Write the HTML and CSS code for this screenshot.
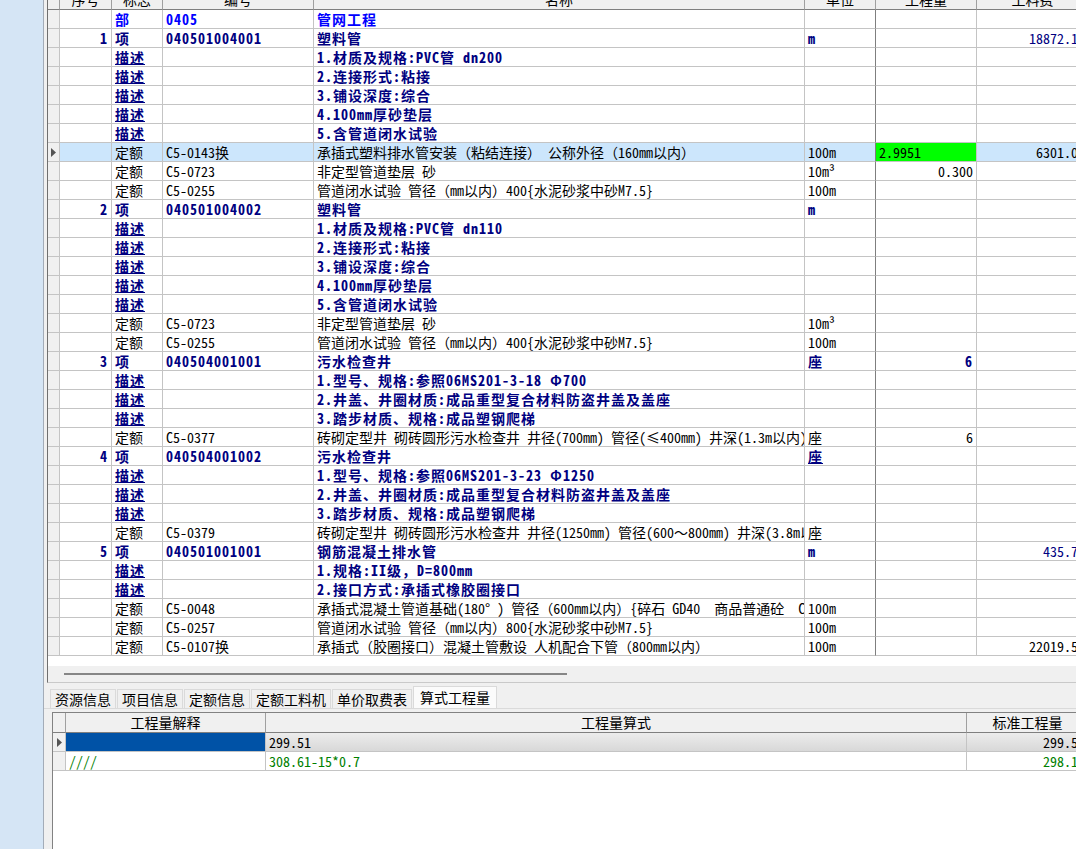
FILE: index.html
```html
<!DOCTYPE html>
<html lang="zh-CN">
<head>
<meta charset="utf-8">
<title>分部分项</title>
<link rel="stylesheet" href="styles.css">
</head>
<body>
<div class="side"></div>
<div class="main">
  <div class="upper">
    <div class="sheet">
      <div class="r hd"><div></div><div>序号</div><div>标志</div><div>编号</div><div>名称</div><div>单位</div><div>工程量</div><div>工料费</div></div>
      <div class="r bu"><div></div><div></div><div>部</div><div>0405</div><div>管网工程</div><div></div><div></div><div></div></div>
      <div class="r xm"><div></div><div>1</div><div>项</div><div>040501004001</div><div>塑料管</div><div>m</div><div></div><div>18872.14</div></div>
      <div class="r ms"><div></div><div></div><div>描述</div><div></div><div>1.材质及规格:PVC管 dn200</div><div></div><div></div><div></div></div>
      <div class="r ms"><div></div><div></div><div>描述</div><div></div><div>2.连接形式:粘接</div><div></div><div></div><div></div></div>
      <div class="r ms"><div></div><div></div><div>描述</div><div></div><div>3.铺设深度:综合</div><div></div><div></div><div></div></div>
      <div class="r ms"><div></div><div></div><div>描述</div><div></div><div>4.100mm厚砂垫层</div><div></div><div></div><div></div></div>
      <div class="r ms"><div></div><div></div><div>描述</div><div></div><div>5.含管道闭水试验</div><div></div><div></div><div></div></div>
      <div class="r sel"><div><svg class="arw" width="5" height="9" viewBox="0 0 5 9"><path d="M0 0L5 4.5L0 9Z"/></svg></div><div></div><div>定额</div><div>C5-0143换</div><div>承插式塑料排水管安装（粘结连接） 公称外径（160mm以内）</div><div>100m</div><div>2.9951</div><div>6301.06</div></div>
      <div class="r"><div></div><div></div><div>定额</div><div>C5-0723</div><div>非定型管道垫层 砂</div><div>10m³</div><div>0.300</div><div></div></div>
      <div class="r"><div></div><div></div><div>定额</div><div>C5-0255</div><div>管道闭水试验 管径（mm以内）400{水泥砂浆中砂M7.5}</div><div>100m</div><div></div><div></div></div>
      <div class="r xm"><div></div><div>2</div><div>项</div><div>040501004002</div><div>塑料管</div><div>m</div><div></div><div></div></div>
      <div class="r ms"><div></div><div></div><div>描述</div><div></div><div>1.材质及规格:PVC管 dn110</div><div></div><div></div><div></div></div>
      <div class="r ms"><div></div><div></div><div>描述</div><div></div><div>2.连接形式:粘接</div><div></div><div></div><div></div></div>
      <div class="r ms"><div></div><div></div><div>描述</div><div></div><div>3.铺设深度:综合</div><div></div><div></div><div></div></div>
      <div class="r ms"><div></div><div></div><div>描述</div><div></div><div>4.100mm厚砂垫层</div><div></div><div></div><div></div></div>
      <div class="r ms"><div></div><div></div><div>描述</div><div></div><div>5.含管道闭水试验</div><div></div><div></div><div></div></div>
      <div class="r"><div></div><div></div><div>定额</div><div>C5-0723</div><div>非定型管道垫层 砂</div><div>10m³</div><div></div><div></div></div>
      <div class="r"><div></div><div></div><div>定额</div><div>C5-0255</div><div>管道闭水试验 管径（mm以内）400{水泥砂浆中砂M7.5}</div><div>100m</div><div></div><div></div></div>
      <div class="r xm"><div></div><div>3</div><div>项</div><div>040504001001</div><div>污水检查井</div><div>座</div><div>6</div><div></div></div>
      <div class="r ms"><div></div><div></div><div>描述</div><div></div><div>1.型号、规格:参照06MS201-3-18 Φ700</div><div></div><div></div><div></div></div>
      <div class="r ms"><div></div><div></div><div>描述</div><div></div><div>2.井盖、井圈材质:成品重型复合材料防盗井盖及盖座</div><div></div><div></div><div></div></div>
      <div class="r ms"><div></div><div></div><div>描述</div><div></div><div>3.踏步材质、规格:成品塑钢爬梯</div><div></div><div></div><div></div></div>
      <div class="r"><div></div><div></div><div>定额</div><div>C5-0377</div><div>砖砌定型井 砌砖圆形污水检查井 井径(700mm) 管径(≤400mm) 井深(1.3m以内)</div><div>座</div><div>6</div><div></div></div>
      <div class="r xm"><div></div><div>4</div><div>项</div><div>040504001002</div><div>污水检查井</div><div class="u">座</div><div></div><div></div></div>
      <div class="r ms"><div></div><div></div><div>描述</div><div></div><div>1.型号、规格:参照06MS201-3-23 Φ1250</div><div></div><div></div><div></div></div>
      <div class="r ms"><div></div><div></div><div>描述</div><div></div><div>2.井盖、井圈材质:成品重型复合材料防盗井盖及盖座</div><div></div><div></div><div></div></div>
      <div class="r ms"><div></div><div></div><div>描述</div><div></div><div>3.踏步材质、规格:成品塑钢爬梯</div><div></div><div></div><div></div></div>
      <div class="r"><div></div><div></div><div>定额</div><div>C5-0379</div><div>砖砌定型井 砌砖圆形污水检查井 井径(1250mm) 管径(600～800mm) 井深(3.8m以内)</div><div>座</div><div></div><div></div></div>
      <div class="r xm"><div></div><div>5</div><div>项</div><div>040501001001</div><div>钢筋混凝土排水管</div><div>m</div><div></div><div>435.72</div></div>
      <div class="r ms"><div></div><div></div><div>描述</div><div></div><div>1.规格:II级，D=800mm</div><div></div><div></div><div></div></div>
      <div class="r ms"><div></div><div></div><div>描述</div><div></div><div>2.接口方式:承插式橡胶圈接口</div><div></div><div></div><div></div></div>
      <div class="r"><div></div><div></div><div>定额</div><div>C5-0048</div><div>承插式混凝土管道基础(180° ) 管径（600mm以内）{碎石 GD40  商品普通砼  C15}</div><div>100m</div><div></div><div></div></div>
      <div class="r"><div></div><div></div><div>定额</div><div>C5-0257</div><div>管道闭水试验 管径（mm以内）800{水泥砂浆中砂M7.5}</div><div>100m</div><div></div><div></div></div>
      <div class="r"><div></div><div></div><div>定额</div><div>C5-0107换</div><div>承插式（胶圈接口）混凝土管敷设 人机配合下管（800mm以内）</div><div>100m</div><div></div><div>22019.53</div></div>
    </div>
    <div class="fill"></div>
    <div class="hscroll"><div class="thumb"></div></div>
  </div>
  <div class="tabs">
    <div class="tab">资源信息</div>
    <div class="tab">项目信息</div>
    <div class="tab">定额信息</div>
    <div class="tab">定额工料机</div>
    <div class="tab">单价取费表</div>
    <div class="tab on">算式工程量</div>
  </div>
  <div class="panel">
    <div class="lg">
      <div class="lr lhd"><div></div><div>工程量解释</div><div>工程量算式</div><div>标准工程量</div></div>
      <div class="lr lsel"><div><svg class="arw" width="5" height="9" viewBox="0 0 5 9"><path d="M0 0L5 4.5L0 9Z"/></svg></div><div></div><div>299.51</div><div>299.51</div></div>
      <div class="lr green"><div></div><div>////</div><div>308.61-15*0.7</div><div>298.11</div></div>
    </div>
  </div>
</div>
</body>
</html>
```
FILE: styles.css
```css
* { box-sizing: border-box; }
html, body { margin: 0; }
body {
  width: 1076px;
  height: 849px;
  overflow: hidden;
  display: flex;
  background: #f0f0f0;
  font-family: "Noto Sans Mono CJK SC", "Noto Sans CJK SC", sans-serif;
  font-size: 14px;
  line-height: 18px;
  color: #000;
}
.side {
  flex: none;
  width: 44px;
  background: #d5e5f5;
  border-right: 1px solid #a3acb8;
}
.main {
  flex: 1;
  min-width: 0;
  display: flex;
  flex-direction: column;
  overflow: hidden;
}
.upper {
  flex: none;
  margin: -10px 0 0 3px;
  background: #fff;
  border-left: 1px solid #6f6f6f;
  border-bottom: 1px solid #c9c9c9;
  overflow: hidden;
}
.r {
  display: grid;
  grid-template-columns: 12px 52px 51px 151px 491px 71px 101px 112px;
  height: 19px;
}
.r > div {
  border-right: 1px solid #c4c4c4;
  border-bottom: 1px solid #c4c4c4;
  padding: 0 3px;
  white-space: pre;
  overflow: hidden;
}
.r > :first-child {
  background: #f0f0f0;
  padding: 0;
  display: flex;
  align-items: center;
  justify-content: center;
}
.r > :nth-child(2), .r > :nth-child(7), .r > :nth-child(8) { text-align: right; }
.r > :nth-child(6) { border-right-color: #7f7f7f; }
.r.hd { height: 20px; background: #f0f0f0; }
.r.hd > div {
  text-align: center;
  border-right-color: #a0a0a0;
  border-bottom-color: #7f7f7f;
  line-height: 19px;
}
.bu { color: #0000ff; font-weight: 700; letter-spacing: 1px; }
.xm, .ms { color: #000080; font-weight: 700; letter-spacing: 1px; }
.xm > :nth-child(8) { font-weight: 400; letter-spacing: 0; }
.ms > :nth-child(3), .u { text-decoration: underline; }
.sel { background: #cce6fc; }
.r.sel > :nth-child(7) { background: #00ff00; text-align: left; }
.arw { fill: #555; display: block; }
.fill { height: 10px; }
.hscroll {
  height: 16px;
  background: #f0f0f0;
  padding: 7px 0 0 16px;
}
.thumb { width: 503px; height: 2px; background: #868686; }
.tabs {
  flex: none;
  height: 25px;
  display: flex;
  align-items: flex-end;
  padding-left: 6px;
  gap: 1px;
}
.tab {
  height: 19px;
  padding: 0 4px;
  border: 1px solid #dadada;
  border-bottom: 0;
  background: #f0f0f0;
  line-height: 18px;
  white-space: nowrap;
}
.tab.on {
  height: 22px;
  padding: 0 6px;
  background: #fbfbfb;
  line-height: 21px;
}
.panel {
  flex: 1;
  border-top: 1px solid #dadada;
  padding: 3px 0 0 8px;
  min-height: 0;
}
.lg {
  height: 100%;
  background: #fff;
  border-top: 1px solid #828282;
  border-left: 1px solid #828282;
  overflow: hidden;
}
.lr {
  display: grid;
  grid-template-columns: 13px 200px 701px 122px;
  height: 19px;
}
.lr > div {
  border-right: 1px solid #c4c4c4;
  border-bottom: 1px solid #c4c4c4;
  padding: 0 3px;
  white-space: pre;
  overflow: hidden;
}
.lr > :first-child {
  background: #f0f0f0;
  padding: 0;
  display: flex;
  align-items: center;
  justify-content: center;
}
.lr > :nth-child(4) { text-align: right; }
.lr.lhd { height: 20px; background: #f0f0f0; }
.lr.lhd > div {
  text-align: center;
  border-right-color: #a0a0a0;
  border-bottom-color: #7f7f7f;
  line-height: 19px;
}
.lsel > :nth-child(2) { background: #0052a6; }
.lsel > :nth-child(3), .lsel > :nth-child(4) { background: linear-gradient(#ececec, #d8d8d8); }
.green { color: #008000; }
```
